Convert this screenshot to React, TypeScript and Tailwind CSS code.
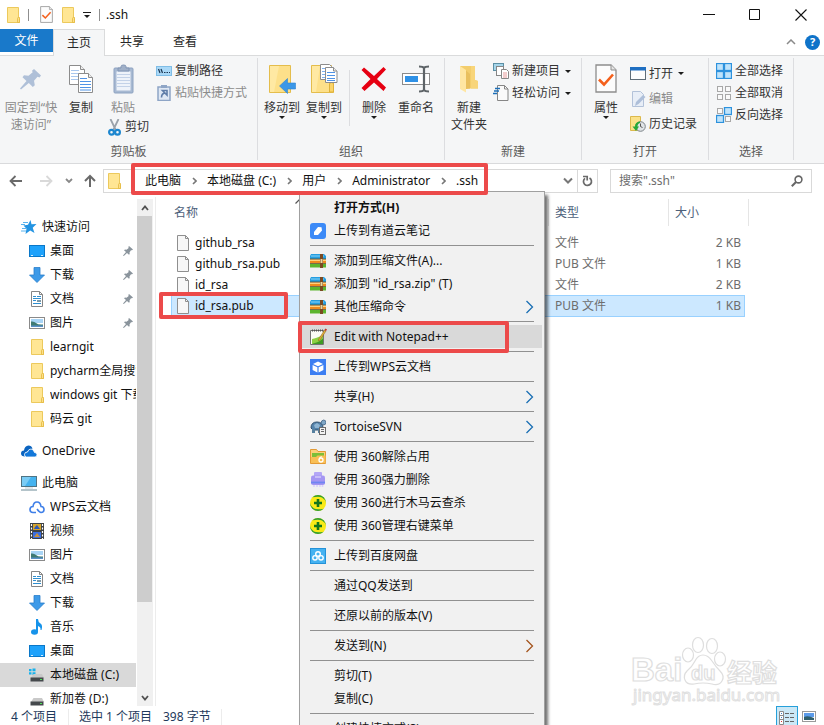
import React from "react";

type Kids = { children?: React.ReactNode };

/* ---------- icons ---------- */

const Svg = ({ w, h, children }: Kids & { w: number; h: number }) => (
  <svg width={w} height={h} viewBox={`0 0 ${w} ${h}`} className="block shrink-0" aria-hidden="true">
    {children}
  </svg>
);

const FolderIcon = () => (
  <svg width="13" height="16" viewBox="0 0 13 16" className="block shrink-0" aria-hidden="true">
    <path d="M.5.5h11v10h1v5H.5z" fill="#ffe694" stroke="#ecc95c" />
    <path d="M10.500 15.500v-4q0-1 1-1t1 1v4z" fill="#fde08a" stroke="#e3b93f" strokeWidth=".8" />
  </svg>
);

const CheckDoc = ({ w = 13, h = 17 }: { w?: number; h?: number }) => (
  <svg width={w} height={h} viewBox="0 0 22 29" className="block shrink-0" aria-hidden="true">
    <path d="M1 1h15l5 5v22H1z" fill="#fcfcfc" stroke="#8d8d8d" strokeWidth="1.300" />
    <path d="M16 1v5h5" fill="#e5e5e5" stroke="#8d8d8d" />
    <path d="M4 15.500l5 5 9-10" fill="none" stroke="#f4601c" strokeWidth="2.600" />
  </svg>
);

const BigPin = () => (
  <Svg w={22} h={22}>
    <path d="M14 1l7 6.500-1.500 2-2-.7-3.500 4 .8 4.500-2 1.700-4-4L1 21.500l-1-1L6.500 13 2.500 9.200 4 7.300l4.500.5L12.700 4.300 12 2.700z" fill="#afc0d8" />
  </Svg>
);

const Pages = () => (
  <>
    <path d="M.5.5h11l4 4v15H.5z" fill="#fff" stroke="#8c8c8c" />
    <path d="M11.500.5v4h4" fill="#eee" stroke="#8c8c8c" />
    <path d="M2 5.500h8M2 8.500h11M2 11.500h11M2 14.500h11" stroke="#a9c7ee" />
    <path d="M9.500 8.500h10l4 4v15h-14z" fill="#fff" stroke="#8c8c8c" />
    <path d="M19.500 8.500v4h4" fill="#eee" stroke="#8c8c8c" />
    <path d="M11 13.500h7M11 16.500h11M11 19.500h11M11 22.500h11M11 25h11" stroke="#4f93e6" />
  </>
);

const CopyIcon = () => (
  <Svg w={24} h={28}>
    <Pages />
  </Svg>
);

const Clipboard = () => (
  <Svg w={21} h={30}>
    <rect x="1" y="4" width="19" height="25" rx="1" fill="#a7b9d2" stroke="#8da2c1" />
    <path d="M3.500 7.500h14v19h-14z" fill="#eef3fa" />
    <path d="M4 10.500h13M4 13.500h13M4 16.500h13M4 19.500h13M4 22.500h13" stroke="#c3d2e8" />
    <path d="M5 7V4h3V2.500Q8 1 10.500 1T13 2.500V4h3v3z" fill="#a0b0c8" stroke="#8296b5" />
  </Svg>
);

const PathIcon = () => (
  <Svg w={16} h={10}>
    <rect x=".5" y=".5" width="15" height="9" fill="#a9d8f7" stroke="#7fbde6" />
    <path d="M2.500 3l1.500 4M5 3l1.500 4M8 6.500h1.500M10.500 6.500H12M13 6.500h1" stroke="#1b3550" strokeWidth="1.200" />
  </Svg>
);

const PasteLink = () => (
  <Svg w={16} h={16}>
    <rect x="2" y="2" width="12" height="13.500" fill="#dfe8f4" stroke="#8ea5c6" strokeWidth="1.500" />
    <path d="M5 0h6v3H5z" fill="#8ea5c6" />
    <path d="M5.500 12.500q0-4 3.500-4.500M6.500 5.500h4.500V10z" fill="none" stroke="#5f7da8" strokeWidth="1.600" />
  </Svg>
);

const Scissors = () => (
  <Svg w={13} h={17}>
    <path d="M2.500 0l5 10.500M10.500 0l-5 10.500" stroke="#9aa2aa" strokeWidth="1.800" />
    <ellipse cx="3.500" cy="13.300" rx="2.400" ry="2.400" fill="none" stroke="#1c86cf" strokeWidth="2.200" />
    <ellipse cx="9.500" cy="13.300" rx="2.400" ry="2.400" fill="none" stroke="#1c86cf" strokeWidth="2.200" />
  </Svg>
);

const MoveTo = () => (
  <Svg w={27} h={30}>
    <path d="M.5 1.500h21v27H.5z" fill="#fde08a" stroke="#e4bd4c" />
    <path d="M1 2h9L5 28H1z" fill="#ffe9a3" />
    <path d="M10.500 22l8-7.500v4.500h8v6h-8v4.500z" fill="#3b97e8" stroke="#2d83d2" strokeWidth=".6" />
  </Svg>
);

const CopyTo = () => (
  <Svg w={27} h={30}>
    <path d="M.5 1.500h20v12h2v15H.5z" fill="#fde08a" stroke="#e4bd4c" />
    <path d="M1 2h8L5 28H1z" fill="#ffe9a3" />
    <path d="M18.500 28v-8q0-1.500 2-1.500t2 1.500v8z" fill="#fbd469" stroke="#dfb23b" />
    <path d="M9.500.5h9l2 2v13h-11z" fill="#fff" stroke="#8c8c8c" />
    <path d="M11 4.500h6M11 7.500h6M11 10.500h6M11 13.500h6" stroke="#7fb0ee" />
    <path d="M14.500 3.500h8l3.500 3.500v11.500H14.500z" fill="#fff" stroke="#8c8c8c" />
    <path d="M22.500 3.500V7H26" fill="#eee" stroke="#8c8c8c" />
    <path d="M16 8.500h8M16 11.500h8M16 14.500h8M16 16.500h8" stroke="#4f93e6" />
  </Svg>
);

const DeleteX = () => (
  <Svg w={26} h={26}>
    <path d="M3 1.500l10 8.500 9.500-9L25 3.500 16 13l9 8.500-2.500 3.500L13 16.500 3.500 25 .5 22 9.500 13 .5 4z" fill="#e60012" />
  </Svg>
);

const RenameIcon = () => (
  <Svg w={28} h={28}>
    <rect x=".5" y="8.500" width="27" height="11" fill="#fff" stroke="#8b8b8b" />
    <rect x="3" y="11" width="13" height="6" fill="#2f91e6" />
    <path d="M22 2v24M17 1.500q4 0 5 1.500 1-1.500 5-1.500M17 26.500q4 0 5-1.500 1 1.500 5 1.500" fill="none" stroke="#5e6468" strokeWidth="2.200" />
  </Svg>
);

const NewFolder = () => (
  <Svg w={20} h={28}>
    <path d="M1 1h15v14l3 1v7.500H6z" fill="#f3cd6c" />
    <path d="M12 1h4v14l3 1v7.500h-7z" fill="#f8d57a" />
    <path d="M1 1l6 4v22.500L1 24z" fill="#ffe6a2" />
    <path d="M7 5.500L11 9v14.500l-4 .5z" fill="#e9bf5d" />
  </Svg>
);

const NewItem = () => (
  <Svg w={16} h={16}>
    <rect x=".5" y=".5" width="10" height="7" fill="#a5d5ea" stroke="#5b8fa5" />
    <rect x="3.500" y="3.500" width="7" height="9" fill="#fff" stroke="#868686" />
    <path d="M8.500 6.500h5l2 2v7h-7z" fill="#fff" stroke="#868686" />
    <path d="M10 10h4M10 12h4M10 14h4" stroke="#e79a9a" />
  </Svg>
);

const EasyAccess = () => (
  <Svg w={16} h={16}>
    <path d="M4.500.5h7l3.500 3.500v11.500H4.500z" fill="#fafafa" stroke="#868686" />
    <path d="M11.500.5V4H15" fill="none" stroke="#868686" />
    <path d="M2 3.500h5M1 6h5M0 8.500h4" stroke="#1c6fb8" strokeWidth="1.400" />
  </Svg>
);

const OpenIcon = () => (
  <Svg w={16} h={14}>
    <rect x=".5" y="1" width="15" height="11.500" fill="#fdfdfd" stroke="#5f6d78" />
    <path d="M0 0h16v3.500H0z" fill="#1f6fc2" />
  </Svg>
);

const EditIcon = () => (
  <Svg w={16} h={16}>
    <path d="M2.500.5h8l3 3v12h-11z" fill="#e8eef7" stroke="#b3c2d9" />
    <path d="M5 15l1-4 7-7 2.500 2-7 7z" fill="#aebfd9" />
  </Svg>
);

const HistoryIcon = () => (
  <Svg w={16} h={16}>
    <path d="M.5.5h10v14H.5z" fill="#fbe28a" stroke="#dcb94d" />
    <circle cx="10.500" cy="10.500" r="4.800" fill="#dfe3e6" stroke="#7b8388" />
    <path d="M10.500 7.500v3l2 1" stroke="#555" fill="none" />
    <path d="M10 5.500q-5 .5-5 5H2.500L6 15l3-4.500H7.500Q7.500 7.500 10 7z" fill="#27a93a" />
  </Svg>
);

const Squares = ({ on }: { on: boolean[] }) => (
  <Svg w={16} h={16}>
    {on.map((v, i) => {
      const x = (i % 2) * 8;
      const y = i > 1 ? 8 : 0;
      return v ? (
        <rect key={i} x={x + 0.500} y={y + 0.500} width="7" height="7" fill="#bfe3fb" stroke="#2d92dd" strokeWidth="1.300" />
      ) : (
        <rect key={i} x={x + 1.500} y={y + 1.500} width="5" height="5" fill="#fafafa" stroke="#a8a8a8" />
      );
    })}
  </Svg>
);

const Caret = ({ className = "" }: { className?: string }) => (
  <svg width="6" height="3" viewBox="0 0 6 3" className={`block shrink-0 ${className}`} aria-hidden="true">
    <path d="M0 0h6L3 3z" fill="#1c1c1c" />
  </svg>
);

const Chevron = ({ d, color = "#777", s = 1.500, w = 10, h = 10 }: { d: string; color?: string; s?: number; w?: number; h?: number }) => (
  <Svg w={w} h={h}>
    <path d={d} fill="none" stroke={color} strokeWidth={s} />
  </Svg>
);

const StarIcon = () => (
  <Svg w={16} h={14}>
    <path d="M9.500 0l1 4.300 5-.3-3.800 3.700 1.800 5.300-4.300-2.600L4.500 14l1-5.200L2.500 5.500l4.500-.7z" fill="#2494e2" />
    <path d="M2 2.500h5M0 4.500h4M1 8.500h4M0 11h5" stroke="#59b3ee" />
  </Svg>
);

const DesktopIcon = () => (
  <Svg w={16} h={12}>
    <rect x=".5" y=".5" width="15" height="11" fill="#1ea2fb" stroke="#0a77c8" />
    <path d="M2 10.500h2M12 10.500h2" stroke="#d4efff" />
  </Svg>
);

const DownIcon = () => (
  <Svg w={16} h={16}>
    <path d="M5 .5h6V8h4.500L8 15.500.5 8H5z" fill="#3d9ae8" stroke="#2a7fcb" strokeWidth=".8" />
  </Svg>
);

const DocIcon = () => (
  <Svg w={14} h={16}>
    <path d="M1.500.5h8l3 3v12h-11z" fill="#fff" stroke="#858585" />
    <path d="M9.500.5v3h3" fill="none" stroke="#858585" />
    <path d="M3 5.500h3M7 5.500h4M3 7.500h8M3 9.500h3M3 12.500h8" stroke="#2f8fd0" />
    <path d="M7 9h4v2H7z" fill="#7d9aa8" />
  </Svg>
);

const PictureIcon = () => (
  <Svg w={16} h={12}>
    <rect x=".5" y=".5" width="15" height="11" fill="#fff" stroke="#8a8a8a" />
    <path d="M2 2h12v4H2z" fill="#a8d4f5" />
    <path d="M2 4.500q3-.5 5 1.500t7 1.500V10H2z" fill="#3f7a72" />
    <path d="M2 8.500h12V10H2z" fill="#5a90c8" />
  </Svg>
);

const CloudIcon = () => (
  <Svg w={16} h={12}>
    <path d="M4 11.500Q0 11.500 0 8.500T3 5.500Q3.500 1 7.500.5q3 0 4 3l-5 3q-4 2-2.500 5z" fill="#0b64c0" />
    <path d="M5.500 12Q3.500 12 3.500 9.500T6.500 7q1-3 3.500-3t3.500 3.500Q16 7.500 16 9.700T14 12z" fill="#1277d9" stroke="#fff" strokeWidth=".8" />
  </Svg>
);

const ComputerIcon = () => (
  <Svg w={16} h={15}>
    <rect x=".5" y=".5" width="15" height="10" fill="#45b3ef" stroke="#4f7484" />
    <path d="M1 1h9L4 10H1z" fill="#7accf5" />
    <path d="M4 12h8" stroke="#c3d0d6" />
    <path d="M0 14h16" stroke="#8ba4ad" strokeWidth="1.300" />
  </Svg>
);

const WpsCloud = () => (
  <Svg w={16} h={13}>
    <path d="M7 11.500H4Q1 11.500 1 8.500t3-3Q4.500 1 8 1t4 4.500q3 0 3 3t-3 3q-1.500 0-4-3.500" fill="none" stroke="#3f7fe8" strokeWidth="1.600" />
  </Svg>
);

const VideoIcon = () => (
  <Svg w={14} h={16}>
    <path d="M0 0h14v16H0z" fill="#3d4145" />
    <path d="M3 1h8v6H3z" fill="#d7a52c" />
    <path d="M3 9h8v6H3z" fill="#3a6ee0" />
    <path d="M1.500 1v15M12.500 1v15" stroke="#fff" strokeWidth="1.200" strokeDasharray="2 1.500" />
    <path d="M5 4l2-2 3 4H4z" fill="#2b58b8" />
    <path d="M4 14l3-4 3 4z" fill="#c88f3c" />
  </Svg>
);

const MusicIcon = () => (
  <Svg w={14} h={16}>
    <ellipse cx="4.500" cy="13" rx="3.500" ry="2.800" fill="#1693ea" />
    <path d="M6 0h2q0 3 2.500 4.500T11.500 11h-1q.5-3-2.500-4v6H6z" fill="#1693ea" />
  </Svg>
);

const DriveIcon = ({ win = false }: { win?: boolean }) => (
  <Svg w={16} h={14}>
    {win && <path d="M0 1h2.500v2.300H0zM3.500.5h3v2.800h-3zM0 4.300h2.500v2.300H0zM3.500 4.300h3v2.800h-3z" fill="#16b1ec" />}
    <path d="M4.500 6h8.500l2 4H2z" fill="#c9c9c9" />
    <path d="M1.500 9.500h13v4h-13z" fill="#45494c" />
    <path d="M11 11.500h2" stroke="#4fe45a" />
    {win && <path d="M0 0h7v8H1z" fill="none" />}
  </Svg>
);

const SmallPin = () => (
  <Svg w={10} h={10}>
    <path d="M6 0l4 3.500-1 .8h-1L6.500 6.500 6.700 8 6 8.800 4 7 .8 10 0 9.500 3 6 1 4.200 2 3.500l1.500.2L5.700 2 5.300 1z" fill="#8a949c" />
  </Svg>
);

const FileIcon = () => (
  <Svg w={12} h={16}>
    <path d="M.5.5h8l3 3v12H.5z" fill="#f7f7f7" stroke="#8f8f8f" />
    <path d="M8.500.5v3h3" fill="none" stroke="#8f8f8f" />
  </Svg>
);

/* context-menu icons */

const NoteIcon = () => (
  <Svg w={16} h={16}>
    <rect width="16" height="16" rx="3" fill="#3c8af7" />
    <path d="M4 12V9l4-5 3.500.3L12 7.500 8 12z" fill="#fff" />
  </Svg>
);

const ZipIcon = () => (
  <Svg w={16} h={14}>
    <path d="M1 0h13l2 2v3H0V2z" fill="#259de0" />
    <path d="M1 2h13" stroke="#8bd6f8" />
    <path d="M0 5.500h16v3.500H0z" fill="#ef8a1d" />
    <path d="M0 6.500h16" stroke="#ffd27a" />
    <path d="M0 10h16v3.500H0z" fill="#5cb52e" />
    <path d="M0 5h16M0 9.500h16" stroke="#5a4a1c" strokeWidth=".8" />
    <path d="M10 0h3v14h-3z" fill="#7a4a22" />
    <path d="M10.500 5h2v4h-2z" fill="#e9d7a0" />
  </Svg>
);

const NotepadIcon = () => (
  <Svg w={17} h={17}>
    <path d="M.5 2.500h13v14H.5z" fill="#fbfcf8" stroke="#747474" />
    <path d="M2 11q4-.5 11-4v9H2z" fill="#8ed043" />
    <path d="M3 15.500q6-1 10-5V16H3z" fill="#3f9a25" />
    <path d="M2 2.500h11" stroke="#555" strokeWidth="2" strokeDasharray="1 1" />
    <path d="M8.500 11.500L14.500 2l1.500 1-6 9-1.500.8z" fill="#e0b13b" stroke="#8b5b1d" strokeWidth=".5" />
    <path d="M14.500 2L16 3l1-1.500L15.500.5z" fill="#c32e22" />
  </Svg>
);

const WpsIcon = () => (
  <Svg w={16} h={16}>
    <rect width="16" height="16" fill="#3c7ef2" />
    <path d="M8 2.500L13 5 8 7.300 3 5zM2.600 6l4.800 2.300v5.200L2.600 11zM13.400 6L8.600 8.300v5.200l4.800-2.500z" fill="#fff" />
  </Svg>
);

const TortoiseIcon = () => (
  <Svg w={16} h={16}>
    <path d="M1 9q0-6 6-6t6 6l-2 2H3z" fill="#5583ab" stroke="#2f4f6d" />
    <path d="M4 6l3-2 3 2-1 3H5z" fill="#8fb5d3" />
    <path d="M11 5q0-4 2.500-4T16 3.500 13 6z" fill="#7ea6c6" stroke="#38597a" strokeWidth=".7" />
    <path d="M2 10h3v4H2zM8 10h3v4H8z" fill="#56809f" />
    <rect x="9.500" y="8.500" width="6" height="7" fill="#f2f2f2" stroke="#6b6b6b" />
    <path d="M11 10.500h3M11 12.500h3" stroke="#6b6b6b" />
  </Svg>
);

const Folder360 = () => (
  <Svg w={16} h={15}>
    <path d="M.5.5h6l1.500 2h7.500v12H.5z" fill="#fbd07a" stroke="#e39a35" />
    <path d="M2 4h12v5H2z" fill="#7cbf38" />
    <path d="M1 8h5l1.500-1.500h8V14H1z" fill="#f9bf55" />
    <circle cx="11" cy="11" r="2" fill="none" stroke="#fff" strokeWidth="1.300" />
    <path d="M9.200 10.500q.3-2.500 2.500-3" fill="none" stroke="#fff" strokeWidth="1.200" />
  </Svg>
);

const Shredder = () => (
  <Svg w={16} h={16}>
    <rect x="4" y="0" width="8" height="6" rx="1" fill="#b3a6f6" />
    <rect x="1" y="3.500" width="14" height="9.500" rx="2" fill="#a596f2" />
    <path d="M5 5h6" stroke="#e9e4ff" />
    <path d="M1 10.500h14" stroke="#6f86f2" strokeWidth="1.800" />
    <path d="M4 13v2M7 13v2M10 13v2M12.500 13v2" stroke="#d8d0fa" strokeWidth="1.500" />
  </Svg>
);

const Safe360 = () => (
  <Svg w={16} h={16}>
    <circle cx="8" cy="8" r="8" fill="#f9ea17" />
    <path d="M2.300 2.300Q5 0 8 0t5.700 2.300Q16 5 16 8q-1-4-4-5.500T2.300 2.300zM13.700 13.700Q11 16 8 16t-5.700-2.300Q0 11 0 8q1 4 4 5.500t9.700.2z" fill="#2f9e35" />
    <path d="M8 4v8M4 8h8" stroke="#12761c" strokeWidth="2.600" />
  </Svg>
);

const BaiduPan = () => (
  <Svg w={16} h={16}>
    <rect x=".5" y=".5" width="15" height="15" fill="#45b2f1" stroke="#2492d8" />
    <circle cx="8" cy="6" r="2.300" fill="none" stroke="#fff" strokeWidth="1.400" />
    <circle cx="5" cy="9.800" r="2.200" fill="none" stroke="#fff" strokeWidth="1.400" />
    <circle cx="11" cy="9.800" r="2.200" fill="none" stroke="#fff" strokeWidth="1.400" />
  </Svg>
);

/* ---------- ribbon ---------- */

const Group = ({ label, width, children }: Kids & { label: string; width: string }) => (
  <section className={`flex shrink-0 flex-col border-r border-[#dcdde0] ${width}`}>
    <div className="flex flex-1">{children}</div>
    <div className="text-center leading-4 text-[#5a5a5a]">{label}</div>
  </section>
);

const Big = ({ icon, lines, width, caret, off }: { icon: React.ReactNode; lines: string[]; width: string; caret?: boolean; off?: boolean }) => (
  <button className={`flex flex-col items-center whitespace-nowrap leading-[17px] ${width} ${off ? "text-[#8b8b8b]" : ""}`}>
    <span className="flex h-[41px] items-center justify-center">{icon}</span>
    {lines.map((l) => (
      <span key={l}>{l}</span>
    ))}
    {caret && <Caret />}
  </button>
);

const Small = ({ icon, label, caret, off, tall }: { icon: React.ReactNode; label: string; caret?: boolean; off?: boolean; tall?: boolean }) => (
  <button className={`flex items-center gap-[3px] whitespace-nowrap ${tall ? "h-[25px]" : "h-[22px]"} ${off ? "text-[#8b8b8b]" : ""}`}>
    <span className="flex w-4 justify-center">{icon}</span>
    <span>{label}</span>
    {caret && <Caret className="ml-[2px]" />}
  </button>
);

const Ribbon = () => (
  <div className="flex h-[108px] shrink-0 border-b border-[#d9dadc] bg-[#f5f6f7] pt-[2px] pb-[3px] text-[#333]">
    <Group label="剪贴板" width="w-[258px]">
      <Big icon={<BigPin />} lines={["固定到“快", "速访问”"]} width="w-[62px]" off />
      <Big icon={<CopyIcon />} lines={["复制"]} width="w-[38px]" />
      <div className="flex w-[52px] flex-col items-start">
        <Big icon={<Clipboard />} lines={["粘贴"]} width="w-[46px]" off />
        <div className="pl-[6px]">
          <Small icon={<Scissors />} label="剪切" />
        </div>
      </div>
      <div className="flex flex-col pt-[2px] pl-1">
        <Small icon={<PathIcon />} label="复制路径" />
        <Small icon={<PasteLink />} label="粘贴快捷方式" off />
      </div>
    </Group>
    <Group label="组织" width="w-[187px]">
      <div className="flex pl-[3px]">
        <Big icon={<MoveTo />} lines={["移动到"]} width="w-[42px]" caret />
        <Big icon={<CopyTo />} lines={["复制到"]} width="w-[42px]" caret />
        <div className="mx-1 mt-3 h-14 w-px bg-[#dcdde0]" />
        <Big icon={<DeleteX />} lines={["删除"]} width="w-10" caret />
        <Big icon={<RenameIcon />} lines={["重命名"]} width="w-11" />
      </div>
    </Group>
    <Group label="新建" width="w-[137px]">
      <Big icon={<NewFolder />} lines={["新建", "文件夹"]} width="w-12" />
      <div className="flex flex-col pt-[2px]">
        <Small icon={<NewItem />} label="新建项目" caret />
        <Small icon={<EasyAccess />} label="轻松访问" caret />
      </div>
    </Group>
    <Group label="打开" width="w-[127px]">
      <Big icon={<CheckDoc w={22} h={29} />} lines={["属性"]} width="w-12" caret />
      <div className="flex flex-col pt-[3px]">
        <Small icon={<OpenIcon />} label="打开" caret tall />
        <Small icon={<EditIcon />} label="编辑" off tall />
        <Small icon={<HistoryIcon />} label="历史记录" tall />
      </div>
    </Group>
    <Group label="选择" width="w-[85px]">
      <div className="flex flex-col pt-[2px] pl-[7px]">
        <Small icon={<Squares on={[true, true, true, true]} />} label="全部选择" />
        <Small icon={<Squares on={[false, false, false, false]} />} label="全部取消" />
        <Small icon={<Squares on={[false, true, true, false]} />} label="反向选择" />
      </div>
    </Group>
  </div>
);

/* ---------- address bar ---------- */

const crumbs = ["此电脑", "本地磁盘 (C:)", "用户", "Administrator", ".ssh"];

const AddressBar = () => (
  <div className="flex h-[33px] shrink-0 items-center pr-3">
    <div className="flex w-[103px] items-center">
      <button aria-label="后退" className="ml-[9px]">
        <Chevron w={14} h={12} color="#6a6a6a" s={1.800} d="M6.500 1L1.500 6l5 5M1.500 6H13" />
      </button>
      <button aria-label="前进" className="ml-4">
        <Chevron w={14} h={12} color="#d9d9d9" s={1.800} d="M7.500 1l5 5-5 5M12.500 6H1" />
      </button>
      <button aria-label="最近位置" className="ml-3">
        <Chevron w={8} h={6} color="#888" s={1.800} d="M1 1l3 3 3-3" />
      </button>
      <button aria-label="向上" className="ml-[10px]">
        <Chevron w={14} h={14} color="#6a6a6a" s={2} d="M2 7l5-5 5 5M7 2v11" />
      </button>
    </div>
    <div className="relative flex h-6 flex-1 items-center border border-[#d9d9d9]">
      <span className="ml-1">
        <FolderIcon />
      </span>
      <nav aria-label="路径" className="ml-6 flex flex-1 items-center whitespace-nowrap">
        {crumbs.map((c, i) => (
          <React.Fragment key={c}>
            {i > 0 && (
              <span className="flex w-[26px] justify-center">
                <Chevron w={5} h={8} color="#777" s={1.600} d="M1 1l3 3-3 3" />
              </span>
            )}
            <button>{c}</button>
          </React.Fragment>
        ))}
      </nav>
      <button aria-label="展开" className="mr-1">
        <Chevron w={10} h={8} color="#777" s={2} d="M1 1.500l4 4 4-4" />
      </button>
      <button aria-label="刷新" className="flex h-full w-5 items-center justify-center border-l border-[#d9d9d9]">
        <Chevron w={11} h={12} color="#6a6a6a" s={1.700} d="M7.500 3A4 4 0 1 1 3 3.300M1 1.500h4.200V5.500" />
      </button>
      <div className="pointer-events-none absolute -top-[7px] left-[27px] z-10 h-8 w-[357px] rounded-[2px] border-4 border-[#ec4a4a]" />
    </div>
    <div className="ml-3 flex h-6 w-[202px] items-center border border-[#d9d9d9] pr-2">
      <input aria-label="搜索" placeholder={'搜索".ssh"'} className="min-w-0 flex-1 bg-transparent pl-2 outline-none placeholder:text-[#6d6d6d]" />
      <Svg w={12} h={12}>
        <circle cx="7.500" cy="4.500" r="3.400" fill="none" stroke="#666" strokeWidth="1.600" />
        <path d="M5 7L.8 11.200" stroke="#666" strokeWidth="2" />
      </Svg>
    </div>
  </div>
);

/* ---------- navigation pane ---------- */

type Item = { icon: React.ReactNode; label: string; pin?: boolean; active?: boolean };

const quick: Item[] = [
  { icon: <DesktopIcon />, label: "桌面", pin: true },
  { icon: <DownIcon />, label: "下载", pin: true },
  { icon: <DocIcon />, label: "文档", pin: true },
  { icon: <PictureIcon />, label: "图片", pin: true },
  { icon: <FolderIcon />, label: "learngit" },
  { icon: <FolderIcon />, label: "pycharm全局搜索" },
  { icon: <FolderIcon />, label: "windows git 下载" },
  { icon: <FolderIcon />, label: "码云 git" },
];

const computer: Item[] = [
  { icon: <WpsCloud />, label: "WPS云文档" },
  { icon: <VideoIcon />, label: "视频" },
  { icon: <PictureIcon />, label: "图片" },
  { icon: <DocIcon />, label: "文档" },
  { icon: <DownIcon />, label: "下载" },
  { icon: <MusicIcon />, label: "音乐" },
  { icon: <DesktopIcon />, label: "桌面" },
  { icon: <DriveIcon win />, label: "本地磁盘 (C:)", active: true },
  { icon: <DriveIcon />, label: "新加卷 (D:)" },
];

const NavRow = ({ item, root }: { item: Item; root?: boolean }) => (
  <button className={`flex h-6 w-full shrink-0 items-center gap-[5px] whitespace-nowrap ${root ? "pl-[21px]" : "pl-[29px]"} ${item.active ? "bg-[#d9d9d9]" : ""}`}>
    <span className="flex w-4 shrink-0 justify-center">{item.icon}</span>
    <span className="min-w-0 flex-1 overflow-hidden text-left">{item.label}</span>
    {item.pin && (
      <span className="mr-[3px]">
        <SmallPin />
      </span>
    )}
  </button>
);

const NavPane = () => (
  <div className="flex w-[156px] shrink-0 border-r border-[#ececec] pt-[2px]">
    <nav aria-label="导航" className="flex w-[136px] flex-col gap-2 overflow-hidden pt-4">
      <div className="shrink-0">
        <NavRow root item={{ icon: <StarIcon />, label: "快速访问" }} />
        {quick.map((i) => (
          <NavRow key={i.label} item={i} />
        ))}
      </div>
      <NavRow root item={{ icon: <CloudIcon />, label: "OneDrive" }} />
      <div className="shrink-0">
        <NavRow root item={{ icon: <ComputerIcon />, label: "此电脑" }} />
        {computer.map((i) => (
          <NavRow key={i.label} item={i} />
        ))}
      </div>
    </nav>
    <div className="ml-px flex w-4 flex-col bg-[#f0f0f0]">
      <button aria-label="向上滚动" className="flex h-[17px] items-center justify-center">
        <Chevron w={8} h={6} color="#505050" s={1.800} d="M1 5l3-3.500L7 5" />
      </button>
      <div className="mr-px flex-[386] bg-[#cdcdcd]" />
      <div className="flex-[87]" />
      <button aria-label="向下滚动" className="flex h-[17px] items-center justify-center">
        <Chevron w={8} h={6} color="#505050" s={1.800} d="M1 1l3 3.500L7 1" />
      </button>
    </div>
  </div>
);

/* ---------- file list ---------- */

const files = [
  { name: "github_rsa", type: "文件", size: "2 KB" },
  { name: "github_rsa.pub", type: "PUB 文件", size: "1 KB" },
  { name: "id_rsa", type: "文件", size: "2 KB" },
  { name: "id_rsa.pub", type: "PUB 文件", size: "1 KB", selected: true },
];

const FileList = () => (
  <div className="flex-1 overflow-hidden pt-[2px] pl-[15px]">
    <div className="flex h-[27px] items-center text-[#4c607a]">
      <div className="relative flex h-full w-[378px] items-center border-r border-[#e5e5e5] pl-[3px]">
        名称
        <span className="absolute top-0 left-[124px]">
          <Chevron w={9} h={5} color="#555" s={1.200} d="M.5 4.500l4-4 4 4" />
        </span>
      </div>
      <div className="flex h-full w-[120px] items-center border-r border-[#e5e5e5] pl-[6px]">类型</div>
      <div className="flex h-full w-20 items-center border-r border-[#e5e5e5] pl-[6px]">大小</div>
    </div>
    <div className="relative mt-[6px] w-[574px]">
      <table aria-label="文件列表" className="w-full table-fixed border-collapse">
        <colgroup>
          <col className="w-[378px]" />
          <col className="w-[116px]" />
          <col className="w-20" />
        </colgroup>
        <tbody>
          {files.map((f) => (
            <tr key={f.name} className={f.selected ? "h-[22px] bg-[#cce8ff] outline outline-1 -outline-offset-1 outline-[#99d1ff]" : "h-[21px]"}>
              <td className="p-0">
                <span className="flex items-center gap-[6px] pl-[6px]">
                  <FileIcon />
                  {f.name}
                </span>
              </td>
              <td className="p-0 pl-[6px] text-[#6d6d6d]">{f.type}</td>
              <td className="p-0 pr-1 text-right text-[#6d6d6d]">{f.size}</td>
            </tr>
          ))}
        </tbody>
      </table>
      <div className="pointer-events-none absolute top-[60px] -left-3 h-[27px] w-[129px] rounded-[2px] border-4 border-[#ec4a4a]" />
    </div>
  </div>
);

/* ---------- context menu ---------- */

type MenuItem = { label: string; icon?: React.ReactNode; bold?: boolean; sub?: string; hot?: boolean };

const menu: MenuItem[][] = [
  [{ label: "打开方式(H)", bold: true }, { label: "上传到有道云笔记", icon: <NoteIcon /> }],
  [
    { label: "添加到压缩文件(A)...", icon: <ZipIcon /> },
    { label: '添加到 "id_rsa.zip" (T)', icon: <ZipIcon /> },
    { label: "其他压缩命令", icon: <ZipIcon />, sub: "#1a6fb4" },
  ],
  [{ label: "Edit with Notepad++", icon: <NotepadIcon />, hot: true }],
  [{ label: "上传到WPS云文档", icon: <WpsIcon /> }],
  [{ label: "共享(H)", sub: "#1a6fb4" }],
  [{ label: "TortoiseSVN", icon: <TortoiseIcon />, sub: "#1a6fb4" }],
  [
    { label: "使用 360解除占用", icon: <Folder360 /> },
    { label: "使用 360强力删除", icon: <Shredder /> },
    { label: "使用 360进行木马云查杀", icon: <Safe360 /> },
    { label: "使用 360管理右键菜单", icon: <Safe360 /> },
  ],
  [{ label: "上传到百度网盘", icon: <BaiduPan /> }],
  [{ label: "通过QQ发送到" }],
  [{ label: "还原以前的版本(V)" }],
  [{ label: "发送到(N)", sub: "#a4551e" }],
  [{ label: "剪切(T)" }, { label: "复制(C)" }],
  [{ label: "创建快捷方式(S)" }],
];

const ContextMenu = () => (
  <div role="menu" className="absolute top-[191px] left-[299px] w-[246px] border border-[#a0a0a0] bg-[#f1f1f1] px-[2px] py-1 shadow-[3px_4px_3px_rgba(0,0,0,0.55)]">
    {menu.map((group, g) => (
      <div key={g}>
        {g > 0 && <div className="mx-2 my-[3px] h-px bg-[#919191]" />}
        {group.map((m) => (
          <button
            key={m.label}
            role="menuitem"
            className={`relative flex h-[23px] w-full items-center pr-2 pl-2 ${m.hot ? "bg-[#d9d9d9]" : ""} ${m.bold ? "font-bold" : ""}`}
          >
            <span className="flex w-4 shrink-0 justify-center">{m.icon}</span>
            <span className="ml-2 flex-1 text-left whitespace-nowrap">{m.label}</span>
            {m.sub && <Chevron w={9} h={14} color={m.sub} s={1.300} d="M1.500 1l6 6-6 6" />}
            {m.hot && <span className="pointer-events-none absolute -top-1 -left-1 h-8 w-[211px] rounded-[2px] border-4 border-[#ec4a4a]" />}
          </button>
        ))}
      </div>
    ))}
  </div>
);

/* ---------- watermark ---------- */

const Watermark = () => (
  <svg
    width="152"
    height="74"
    viewBox="0 0 152 74"
    className="pointer-events-none absolute right-[43px] bottom-[16px]"
    fill="#fff"
    stroke="#dedede"
    strokeWidth="1.200"
    fontFamily='"Liberation Sans", "Noto Sans CJK SC", sans-serif'
    fontWeight="700"
    aria-hidden="true"
  >
    <text x="2" y="46" fontSize="33">Bai</text>
    <ellipse cx="59" cy="20" rx="5.500" ry="7" />
    <ellipse cx="69" cy="10" rx="5.500" ry="7.500" />
    <ellipse cx="83" cy="11" rx="5.500" ry="7.500" />
    <ellipse cx="91" cy="24" rx="5.500" ry="7" />
    <path d="M74 20q5 0 9 6t8 10q5 5 2 10t-10 3q-9-2-18 0-7 1-9-4t2-9q5-4 8-10t8-6z" />
    <text x="62" y="45" fontSize="20">du</text>
    <text x="98" y="47" fontSize="25">经验</text>
    <text x="4" y="66" fontSize="17" fontWeight="400" stroke="#e0e0e0" strokeWidth="1" fontFamily='"Noto Sans", sans-serif'>
      jingyan.baidu.com
    </text>
  </svg>
);

/* ---------- window ---------- */

const Tabs = () => (
  <div className="relative flex h-[27px] shrink-0 items-stretch border-b border-[#dadbdc]">
    <button className="mb-[3px] w-[53px] bg-[#1979ca] pt-px text-white">文件</button>
    <button className="-mb-px w-[52px] border border-b-0 border-[#dadbdc] bg-[#f5f6f7] text-[#262626]">主页</button>
    <button className="w-[54px] text-[#262626]">共享</button>
    <button className="w-[52px] text-[#262626]">查看</button>
    <div className="ml-auto flex items-center gap-[9px] pr-1">
      <button aria-label="折叠功能区">
        <Chevron w={10} h={6} color="#8a8a8a" d="M1 5l4-4 4 4" />
      </button>
      <button aria-label="帮助" className="flex size-[15px] items-center justify-center rounded-full bg-[#0f73c9] text-[11px] font-bold text-white">
        ?
      </button>
    </div>
  </div>
);

const TitleBar = () => (
  <header className="flex h-[29px] shrink-0 items-center">
    <span className="ml-[7px]">
      <FolderIcon />
    </span>
    <span className="ml-2 h-3 w-px bg-[#8f8f8f]" />
    <button aria-label="属性" className="ml-[11px]">
      <CheckDoc />
    </button>
    <button aria-label="新建文件夹" className="ml-[9px]">
      <FolderIcon />
    </button>
    <button aria-label="自定义快速访问工具栏" className="ml-2 flex flex-col items-center gap-[2px]">
      <span className="h-px w-2 bg-[#1c1c1c]" />
      <Caret />
    </button>
    <span className="ml-2 h-3 w-px bg-[#8f8f8f]" />
    <h1 className="ml-[6px] flex-1">.ssh</h1>
    <button aria-label="最小化" className="flex w-[46px] justify-center">
      <Chevron w={12} h={12} color="#111" s={1} d="M0 5.500h12" />
    </button>
    <button aria-label="最大化" className="flex w-[46px] justify-center">
      <Chevron w={12} h={12} color="#111" s={1} d="M.5.5h10v10H.5z" />
    </button>
    <button aria-label="关闭" className="flex w-[46px] justify-center">
      <Chevron w={12} h={12} color="#111" s={1.100} d="M.5.5l11 11M11.500.5L.5 11.500" />
    </button>
  </header>
);

const StatusBar = () => (
  <footer className="flex h-[19px] shrink-0 items-end pl-[11px] leading-4 whitespace-nowrap text-[#1e395b]">
    <span className="w-[57px]">4 个项目</span>
    <span className="h-4 w-px bg-[#ececec]" />
    <span className="w-[84px] pl-[10px]">选中 1 个项目</span>
    <span className="w-[68px] pl-[10px]">398 字节</span>
    <span className="h-4 w-px bg-[#ececec]" />
    <button aria-label="详细信息" className="ml-auto flex h-full w-[22px] justify-center overflow-hidden border border-b-0 border-[#26a0da] bg-[#cbe8f6] pt-1">
      <Svg w={18} h={14}>
        <path d="M1.500.5h4v13h-4zM1.500 4.500h4M1.500 8.500h4" fill="#fff" stroke="#8a8a8a" />
        <path d="M3 2.500h1M3 6.500h1" stroke="#3d7fc4" />
        <path d="M3 10.500h1" stroke="#d33" />
        <path d="M7 2.500h4M12 2.500h4M7 6.500h4M12 6.500h4M7 10.500h4M12 10.500h4" stroke="#666" />
      </Svg>
    </button>
    <button aria-label="大图标" className="mr-2 mb-[3px] ml-1 w-[14px]">
      <Svg w={14} h={11}>
        <rect x=".5" y=".5" width="13" height="10" fill="#fff" stroke="#9a9a9a" />
        <path d="M2 2h10v4H2z" fill="#5b9bea" />
        <path d="M2 6q4-2 10 1v2H2z" fill="#2f5f6d" />
      </Svg>
    </button>
  </footer>
);

export default function App() {
  return (
    <div className="relative flex h-screen flex-col overflow-hidden bg-white font-['Noto_Sans','Noto_Sans_CJK_SC',sans-serif] text-[12px] leading-[16px] text-[#111]">
      <TitleBar />
      <Tabs />
      <Ribbon />
      <AddressBar />
      <main className="flex min-h-0 flex-1">
        <NavPane />
        <FileList />
      </main>
      <StatusBar />
      <Watermark />
      <ContextMenu />
    </div>
  );
}
